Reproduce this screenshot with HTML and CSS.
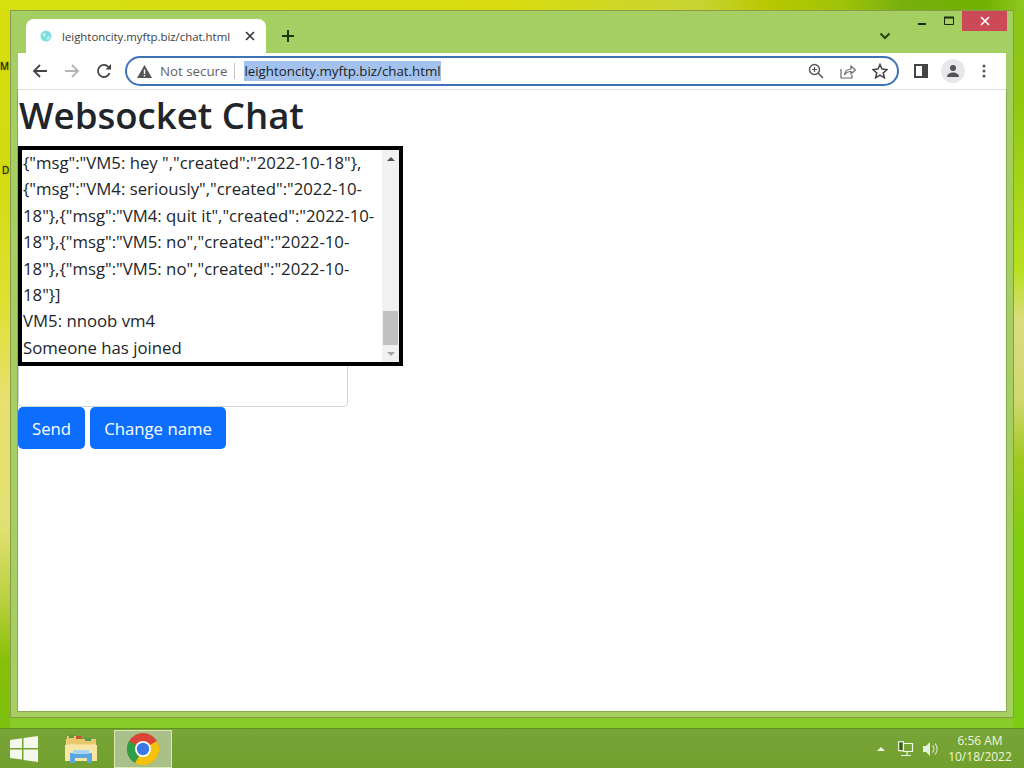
FILE: index.html
```html
<!DOCTYPE html>
<html lang="en">
<head>
<meta charset="utf-8">
<title>Websocket Chat</title>
<link rel="stylesheet" href="styles.css">
</head>
<body>
<div class="desktop">
  <span class="dlabel dlabel-m">M</span>
  <span class="dlabel dlabel-d">D</span>
  <div class="window">
    <div class="titlebar">
      <div class="tab">
        <svg class="favicon" width="12" height="12" viewBox="0 0 12 12"><circle cx="6" cy="6" r="5.5" fill="#7fdde0"/><path d="M2 4l3-1 1 2-2 2zM7 7l3-1-1 3-2 1z" fill="#c8f2f2"/></svg>
        <span class="tab-title">leightoncity.myftp.biz/chat.html</span>
        <svg class="tab-close" width="10" height="10" viewBox="0 0 10 10"><path d="M1 1l8 8M9 1l-8 8" stroke="#333" stroke-width="1.6"/></svg>
      </div>
      <svg class="newtab" width="14" height="14" viewBox="0 0 14 14"><path d="M7 1v12M1 7h12" stroke="#1c3a08" stroke-width="2"/></svg>
      <div class="title-spacer"></div>
      <svg class="tabsearch" width="12" height="8" viewBox="0 0 12 8"><path d="M1.5 1.5L6 6l4.500-4.500" fill="none" stroke="#24400c" stroke-width="2"/></svg>
      <div class="winbtns">
        <span class="winbtn"><svg width="10" height="10" viewBox="0 0 10 10"><path d="M1 8h8" stroke="#1a2a08" stroke-width="2"/></svg></span>
        <span class="winbtn"><svg width="11" height="10" viewBox="0 0 11 10"><path d="M.5 1.500h9v7h-9z" fill="none" stroke="#1a2a08"/><path d="M0 1.500h10" stroke="#1a2a08" stroke-width="2"/></svg></span>
        <span class="winbtn winclose"><svg width="10" height="10" viewBox="0 0 10 10"><path d="M1 1l8 8M9 1l-8 8" stroke="#fff" stroke-width="1.700"/></svg></span>
      </div>
    </div>
    <div class="toolbar">
      <svg class="nav" width="16" height="16" viewBox="0 0 16 16"><path d="M15 8H2M8 2L2 8l6 6" fill="none" stroke="#444" stroke-width="1.800"/></svg>
      <svg class="nav" width="16" height="16" viewBox="0 0 16 16"><path d="M1 8h13M8 2l6 6-6 6" fill="none" stroke="#b4b4b4" stroke-width="1.800"/></svg>
      <svg class="nav" width="16" height="16" viewBox="0 0 16 16"><path d="M13.600 10A6 6 0 1 1 12.300 3.800" fill="none" stroke="#444" stroke-width="1.800"/><path d="M9.500 6.500H15V1z" fill="#444"/></svg>
      <div class="omnibox">
        <svg class="warn" width="15" height="13" viewBox="0 0 15 13"><path d="M7.500 0L15 13H0z" fill="#555"/><path d="M6.800 4.500h1.400v4.500H6.800zM6.800 10h1.400v1.400H6.800z" fill="#fff"/></svg>
        <span class="notsecure">Not secure</span>
        <span class="sep"></span>
        <span class="url">leightoncity.myftp.biz/chat.html</span>
        <span class="omni-spacer"></span>
        <svg class="omni-icon" width="16" height="16" viewBox="0 0 16 16"><circle cx="6.500" cy="6.500" r="5" fill="none" stroke="#555" stroke-width="1.400"/><path d="M10.300 10.300L15 15" stroke="#555" stroke-width="1.600"/><path d="M6.500 4v5M4 6.500h5" stroke="#555" stroke-width="1.200"/></svg>
        <svg class="omni-icon" width="16" height="16" viewBox="0 0 16 16"><path d="M1 6v9h11v-3" fill="none" stroke="#666" stroke-width="1.200"/><path d="M4.500 12c.5-4 3-6 6.500-6V3l4.500 4-4.500 4V8.500c-3 0-5 1-6.500 3.500z" fill="none" stroke="#666" stroke-width="1.200"/></svg>
        <svg class="omni-icon" width="16" height="16" viewBox="0 0 16 16"><path d="M8 1.500l2 4.600 5 .5-3.800 3.300 1.200 4.900L8 12.200l-4.400 2.600 1.200-4.900L1 6.600l5-.5z" fill="none" stroke="#444" stroke-width="1.500"/></svg>
      </div>
      <svg class="side-icon" width="14" height="14" viewBox="0 0 14 14"><rect x="1" y="1" width="12" height="12" fill="none" stroke="#444" stroke-width="2"/><rect x="8" y="1" width="5" height="12" fill="#444"/></svg>
      <span class="avatar"><svg width="14" height="14" viewBox="0 0 14 14"><circle cx="7" cy="4" r="3" fill="#555"/><path d="M1 13c0-3 3-4.500 6-4.500s6 1.500 6 4.500z" fill="#555"/></svg></span>
      <svg class="menu-icon" width="4" height="14" viewBox="0 0 4 14"><circle cx="2" cy="2" r="1.500" fill="#555"/><circle cx="2" cy="7" r="1.500" fill="#555"/><circle cx="2" cy="12" r="1.500" fill="#555"/></svg>
    </div>
    <main class="page">
      <h1 class="heading">Websocket Chat</h1>
      <div class="chatbox">
        <div class="log">
          <div>{"msg":"VM5: hey ","created":"2022-10-18"},</div>
          <div>{"msg":"VM4: seriously","created":"2022-10-</div>
          <div>18"},{"msg":"VM4: quit it","created":"2022-10-</div>
          <div>18"},{"msg":"VM5: no","created":"2022-10-</div>
          <div>18"},{"msg":"VM5: no","created":"2022-10-</div>
          <div>18"}]</div>
          <div>VM5: nnoob vm4</div>
          <div>Someone has joined</div>
        </div>
        <div class="scrollbar">
          <span class="arrow arrow-up"></span>
          <span class="track"><span class="thumb"></span></span>
          <span class="arrow arrow-down"></span>
        </div>
      </div>
      <input class="msg-input" type="text" aria-label="Message">
      <div class="actions">
        <button class="btn" type="button">Send</button>
        <button class="btn" type="button">Change name</button>
      </div>
    </main>
  </div>
</div>
<footer class="taskbar">
  <svg class="start" width="28" height="26" viewBox="0 0 28 26"><path d="M0 4l12-1.700V12H0zM13.500 2L28 0v12H13.500zM0 13.500h12v10L0 22zM13.500 13.500H28V26l-14.500-2z" fill="#f4f8ec"/></svg>
  <span class="task-item">
    <svg width="34" height="32" viewBox="0 0 34 32"><path d="M2 6h30v22H2z" fill="#f3d98a"/><path d="M3 3h12l2 3h15v5H3z" fill="#e8c96c"/><rect x="5" y="2" width="5" height="3" fill="#4f9d4a"/><rect x="12" y="3" width="5" height="3" fill="#c8503a"/><rect x="21" y="5" width="6" height="3" fill="#4f9d4a"/><path d="M1 12h32v16H1z" fill="#f8e6a6"/><path d="M6 30V20h22v10h-5v-5H11v5z" fill="#5aa6e0"/><path d="M9 17h16v4H9z" fill="#a6d4f2"/></svg>
  </span>
  <span class="task-item task-active">
    <svg width="32" height="32" viewBox="0 0 32 32"><circle cx="16" cy="16" r="16" fill="#db4437"/><path d="M16 16L29.900 8A16 16 0 0 1 16 32z" fill="#f4c20d"/><path d="M16 16l-8 13.900A16 16 0 0 1 2.100 8z" fill="#2f9e44"/><path d="M16 16L29.900 24A16 16 0 0 1 8 29.900z" fill="#f4c20d"/><circle cx="16" cy="16" r="8" fill="#fff"/><circle cx="16" cy="16" r="6.200" fill="#3b78e7"/></svg>
  </span>
  <span class="tray-spacer"></span>
  <span class="tray-arrow"></span>
  <svg class="tray-icon" width="16" height="16" viewBox="0 0 16 16"><path d="M5.500 2.500h9v8h-9zM3 14.500h10M9 11v3" fill="none" stroke="#f2f8e6" stroke-width="1.200"/><rect x=".7" y=".7" width="4.600" height="9" fill="#3a5a14" stroke="#f2f8e6" stroke-width="1.200"/></svg>
  <svg class="tray-icon" width="17" height="16" viewBox="0 0 17 16"><path d="M1 5h3l4-4v14l-4-4H1z" fill="#e6eedc"/><path d="M10.500 4.500a5 5 0 0 1 0 7M13 2.500a8 8 0 0 1 0 11" fill="none" stroke="#d4e2c0" stroke-width="1.200"/></svg>
  <div class="clock"><span>6:56 AM</span><span>10/18/2022</span></div>
</footer>
</body>
</html>
```
FILE: styles.css
```css
* { box-sizing: border-box; }
html, body { margin: 0; height: 100%; }
body {
  width: 1024px;
  height: 768px;
  overflow: hidden;
  display: flex;
  flex-direction: column;
  font-family: "Open Sans", "Noto Sans", sans-serif;
  background: #88cc2a;
}
.desktop {
  position: relative;
  height: 728px;
  padding: 10px 10px 10px 10px;
  background-repeat: no-repeat;
  background-image:
    linear-gradient(90deg, #d8e010 0%, #d8dc10 50%, #c8d434 68%, #b8c800 75%, #a0c408 82%, #78b010 88%, #70b000 96%, #90c820 100%),
    linear-gradient(180deg, #d8de10 0, #d0dc10 170px, #dfe030 300px, #e8e070 400px, #e0e070 530px, #b8d040 600px, #88c008 660px, #7cc010 728px),
    linear-gradient(180deg, #8cc41a 0, #90c810 100px, #b8e020 270px, #dcdc80 320px, #d0d870 400px, #a0c820 460px, #80cc10 540px, #7ccc14 728px);
  background-size: 100% 10px, 10px 100%, 10px 100%;
  background-position: 0 0, 0 0, 100% 0;
  background-color: #88cc2a;
}
.dlabel { position: absolute; left: 0; width: 10px; height: 14px; padding-left: 2px; color: #111; font-size: 10px; line-height: 14px; text-shadow: 0 0 2px #6a6a00; }
.dlabel-m { top: 59px; padding-left: 0; }
.dlabel-d { top: 163px; }
.window { height: 708px; display: flex; flex-direction: column; background: #a5cf62; border: 1px solid #8a9c4a; padding: 0 7px 6px 7px; }
.titlebar { height: 42px; display: flex; align-items: flex-start; margin: 0 -7px 0 0; flex: none; }
.tab { width: 240px; height: 34px; margin: 8px 0 0 8px; background: #fff; border-radius: 8px 8px 0 0; display: flex; align-items: center; padding: 0 11px 0 14px; flex: none; }
.favicon { flex: none; margin-right: 10px; }
.tab-title { flex: 1; font-size: 11.400px; color: #3c3c3c; white-space: nowrap; }
.tab-close { flex: none; }
.newtab { margin: 18px 0 0 15px; }
.title-spacer { flex: 1; }
.tabsearch { margin: 21px 21px 0 0; }
.winbtns { display: flex; flex: none; align-items: flex-start; gap: 7px; margin-right: 6px; }
.winbtn { width: 20px; height: 20px; display: flex; align-items: center; justify-content: center; flex: none; }
.winclose { width: 45px; margin-left: -4px; background: #cc4a58; }
.toolbar { position: relative; z-index: 1; height: 37px; flex: none; background: #fff; border-bottom: 1px solid #dedfd6; display: flex; align-items: center; padding: 0 0 0 14px; gap: 16px; }
.nav { flex: none; }
.omnibox { width: 774px; height: 30px; margin-left: -3px; border: 2px solid #3d72b8; border-radius: 15px; display: flex; align-items: center; padding: 0 9px 0 10px; flex: none; }
.warn { flex: none; margin-right: 8px; }
.notsecure { font-size: 13.300px; color: #5f6368; white-space: nowrap; }
.sep { width: 1px; height: 16px; background: #c4c4c4; margin: 0 9px 0 7px; }
.url { font-size: 13.300px; color: #222; background: #a3c2ee; line-height: 20px; white-space: nowrap; }
.omni-spacer { flex: 1; }
.omni-icon { flex: none; margin-left: 16px; }
.side-icon { flex: none; margin-left: -1px; }
.avatar { width: 24px; height: 24px; margin-left: -3px; border-radius: 50%; background: #e6e8ec; display: flex; align-items: center; justify-content: center; flex: none; }
.menu-icon { flex: none; margin-left: 1px; }
.page { flex: 1; background: #fff; min-height: 0; box-shadow: 0 0 0 1px #8aa850; }
.heading { margin: 0; height: 56px; font-size: 36.600px; line-height: 50px; font-weight: 600; color: #212529; padding-left: 1px; white-space: nowrap; }
.chatbox { width: 385px; height: 220px; border: 4px solid #000; display: flex; background: #fff; }
.log { flex: 1; min-width: 0; padding-left: 1px; font-size: 16.750px; line-height: 26.400px; color: #212529; white-space: nowrap; overflow: hidden; }
.scrollbar { width: 17px; flex: none; background: #f1f1f1; display: flex; flex-direction: column; }
.arrow { height: 17px; flex: none; display: flex; align-items: center; justify-content: center; }
.arrow::before { content: ""; border-left: 4px solid transparent; border-right: 4px solid transparent; }
.arrow-up::before { border-bottom: 4px solid #505050; }
.arrow-down::before { border-top: 4px solid #a3a3a3; }
.track { flex: 1; display: flex; flex-direction: column; justify-content: flex-end; padding: 0 1px; }
.thumb { height: 34px; background: #c1c1c1; }
.msg-input { display: block; width: 330px; height: 41px; border: 1px solid #ced4da; border-top: 0; border-radius: 0 0 5px 5px; background: #fff; }
.actions { display: flex; gap: 5px; }
.btn { height: 42px; padding: 0 14px; border: 0; border-radius: 5px; background: #0d6efd; color: #fff; font: 16.750px "Open Sans", "Noto Sans", sans-serif; }
.taskbar { height: 40px; flex: none; display: flex; align-items: center; padding: 0 11px 0 10px; background: linear-gradient(180deg, #78a438, #72a02e); border-top: 1px solid #5f9020; }
.start { flex: none; }
.task-item { width: 58px; height: 39px; display: flex; align-items: center; justify-content: center; flex: none; margin-left: 14px; }
.task-active { margin-left: 4px; height: 38px; background: #a9c08a; border: 1px solid #dbe8b0; }
.tray-spacer { flex: 1; }
.tray-arrow { border-left: 4px solid transparent; border-right: 4px solid transparent; border-bottom: 4px solid #f2f8e6; margin-right: 13px; }
.tray-icon { flex: none; margin-right: 8px; }
.clock { width: 66px; display: flex; flex-direction: column; align-items: center; font-size: 12px; line-height: 16px; color: #eef6dc; white-space: nowrap; margin-top: 1px; }
```
